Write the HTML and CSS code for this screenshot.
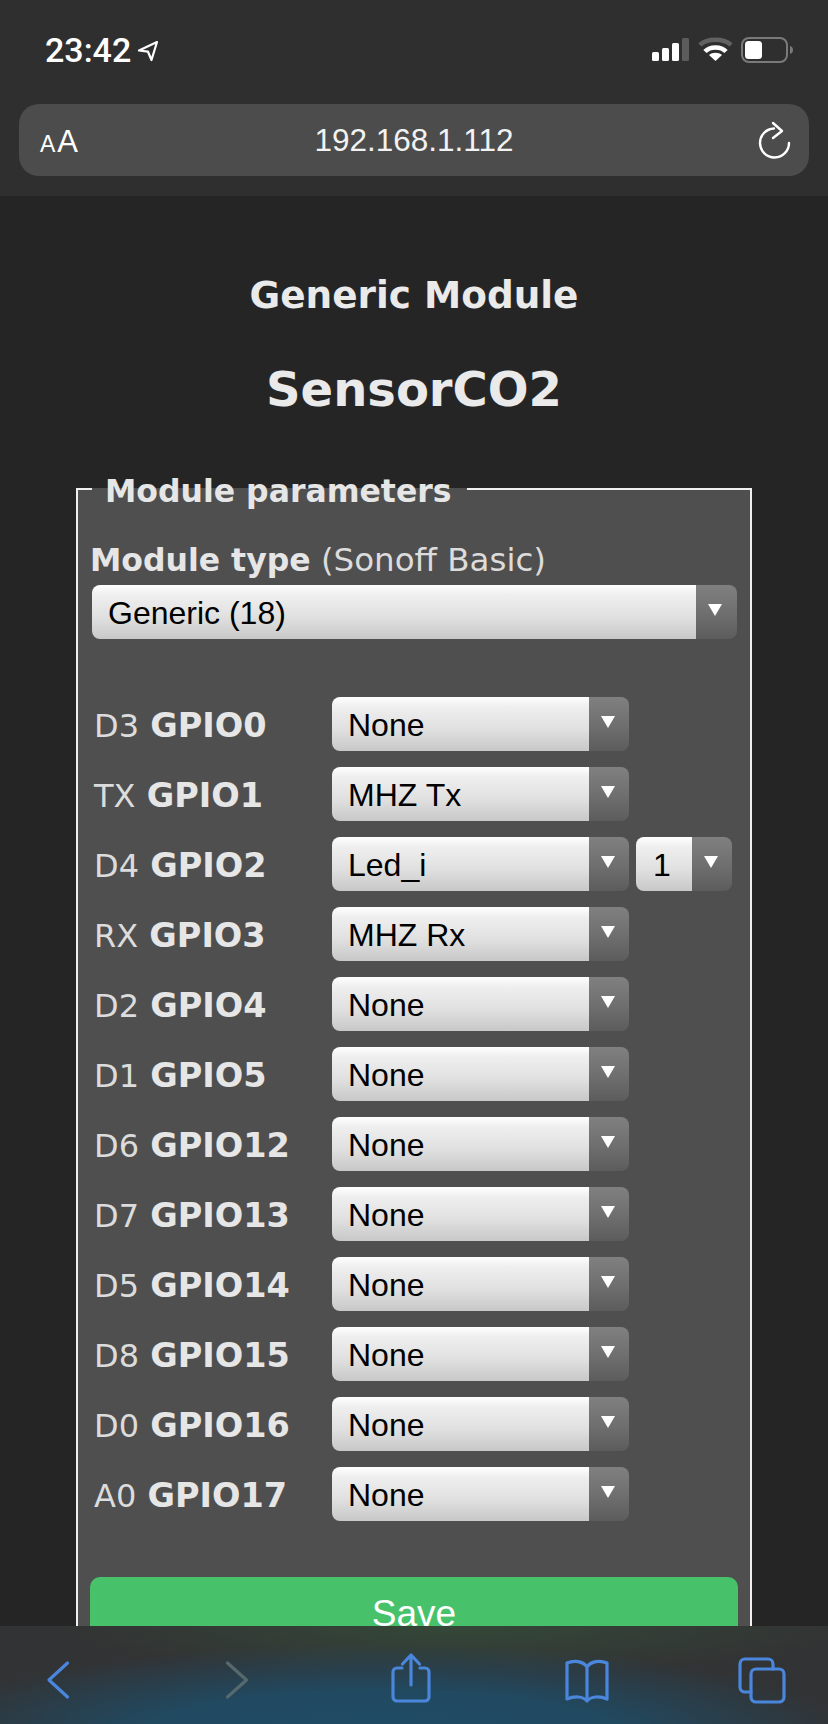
FILE: index.html
```html
<!DOCTYPE html>
<html lang="en">
<head>
<meta charset="utf-8">
<title>Generic Module</title>
<link rel="stylesheet" href="styles.css">
</head>
<body>
<div class="screen">
  <header class="chrome">
    <div class="status">
      <div class="status-left">
        <span class="time">23:42</span>
        <svg class="loc" width="22" height="22" viewBox="0 0 22 22"><path d="M20 2 2 10.500l9 1.200L14.500 20z" fill="none" stroke="#fff" stroke-width="2.200" stroke-linejoin="round"/></svg>
      </div>
      <svg class="status-icons" width="144" height="28" viewBox="0 0 144 28">
        <rect x="3" y="16" width="7" height="9" rx="1.500" fill="#fff"/>
        <rect x="13" y="12" width="7" height="13" rx="1.500" fill="#fff"/>
        <rect x="23" y="7" width="7" height="18" rx="1.500" fill="#fff"/>
        <rect x="33" y="2" width="7" height="23" rx="1.500" fill="#5c5c5c"/>
        <path d="M51 9C58 2 75 2 82 9" fill="none" stroke="#626262" stroke-width="4.500"/>
        <path d="M56 15.500C61 10 72 10 77 15.500" fill="none" stroke="#fff" stroke-width="4.500"/>
        <path d="M66.500 25 60 19C63.500 16 69.500 16 73 19z" fill="#fff"/>
        <rect x="93" y="2" width="45" height="24" rx="7" fill="none" stroke="#7a7a7a" stroke-width="2"/>
        <rect x="96" y="5" width="17" height="18" rx="3.500" fill="#fff"/>
        <path d="M141 10c2 .6 3 2.200 3 4s-1 3.400-3 4z" fill="#7a7a7a"/>
      </svg>
    </div>
    <div class="urlbar">
      <span class="aa"><span class="aa-small">A</span>A</span>
      <span class="url">192.168.1.112</span>
      <svg class="reload" width="34" height="38" viewBox="0 0 34 38"><path d="M18 6.500A14.500 14.500 0 1 0 33 21" fill="none" stroke="#fff" stroke-width="2.400" stroke-linecap="round"/><path d="M17 1 26 9l-9 7" fill="none" stroke="#fff" stroke-width="2.400" stroke-linecap="round" stroke-linejoin="round"/></svg>
    </div>
  </header>

  <main class="page">
    <h3 class="subtitle">Generic Module</h3>
    <h2 class="title">SensorCO2</h2>
    <fieldset class="panel">
      <legend class="legend">Module parameters</legend>
      <div class="type-label"><b>Module type</b> (Sonoff Basic)</div>
      <div class="select select-wide"><span class="select-value">Generic (18)</span><span class="select-arrow"></span></div>

      <div class="rows">
        <div class="row"><span class="pin">D3 <b>GPIO0</b></span><div class="select select-pin"><span class="select-value">None</span><span class="select-arrow"></span></div></div>
        <div class="row"><span class="pin">TX <b>GPIO1</b></span><div class="select select-pin"><span class="select-value">MHZ Tx</span><span class="select-arrow"></span></div></div>
        <div class="row"><span class="pin">D4 <b>GPIO2</b></span><div class="select select-pin"><span class="select-value">Led_i</span><span class="select-arrow"></span></div><div class="select select-index"><span class="select-value">1</span><span class="select-arrow"></span></div></div>
        <div class="row"><span class="pin">RX <b>GPIO3</b></span><div class="select select-pin"><span class="select-value">MHZ Rx</span><span class="select-arrow"></span></div></div>
        <div class="row"><span class="pin">D2 <b>GPIO4</b></span><div class="select select-pin"><span class="select-value">None</span><span class="select-arrow"></span></div></div>
        <div class="row"><span class="pin">D1 <b>GPIO5</b></span><div class="select select-pin"><span class="select-value">None</span><span class="select-arrow"></span></div></div>
        <div class="row"><span class="pin">D6 <b>GPIO12</b></span><div class="select select-pin"><span class="select-value">None</span><span class="select-arrow"></span></div></div>
        <div class="row"><span class="pin">D7 <b>GPIO13</b></span><div class="select select-pin"><span class="select-value">None</span><span class="select-arrow"></span></div></div>
        <div class="row"><span class="pin">D5 <b>GPIO14</b></span><div class="select select-pin"><span class="select-value">None</span><span class="select-arrow"></span></div></div>
        <div class="row"><span class="pin">D8 <b>GPIO15</b></span><div class="select select-pin"><span class="select-value">None</span><span class="select-arrow"></span></div></div>
        <div class="row"><span class="pin">D0 <b>GPIO16</b></span><div class="select select-pin"><span class="select-value">None</span><span class="select-arrow"></span></div></div>
        <div class="row"><span class="pin">A0 <b>GPIO17</b></span><div class="select select-pin"><span class="select-value">None</span><span class="select-arrow"></span></div></div>
      </div>

      <button class="save">Save</button>
    </fieldset>
  </main>

  <nav class="toolbar">
    <svg class="toolbar-icons" width="828" height="98" viewBox="0 0 828 98" fill="none" stroke="#4a86dc" stroke-width="3.200" stroke-linecap="round" stroke-linejoin="round">
      <path d="M67.500 37 49 54l18.500 17"/>
      <path d="M227.500 37 246.500 54l-19 17" stroke="#56696c"/>
      <path d="M402 42h-5a4 4 0 0 0-4 4v25a4 4 0 0 0 4 4h28a4 4 0 0 0 4-4V46a4 4 0 0 0-4-4h-5"/>
      <path d="M411 59V30M402.500 38l8.500-9 8.500 9"/>
      <path d="M587 41c-4-6-13-7-20-4v36c7-3 16-3 20 2 4-5 13-5 20-2V37c-7-3-16-2-20 4zM587 41v34"/>
      <path d="M751 66h-6a5 5 0 0 1-5-5V38a5 5 0 0 1 5-5h23a5 5 0 0 1 5 5v5"/>
      <rect x="751" y="43" width="33" height="33" rx="5"/>
    </svg>
  </nav>
</div>
</body>
</html>
```

FILE: styles.css
```css
* { box-sizing: border-box; }

html, body { margin: 0; padding: 0; }

body {
  background: #252525;
  font-family: "DejaVu Sans", Verdana, sans-serif;
}

.screen {
  position: relative;
  width: 828px;
  height: 1724px;
  overflow: hidden;
  background: #252525;
}

/* Browser chrome */
.chrome {
  height: 196px;
  background: #2f2f2f;
  padding: 0 19px;
}

.status {
  height: 104px;
  display: flex;
  align-items: flex-start;
  justify-content: space-between;
  padding: 36px 0 0 26px;
}

.status-left {
  display: flex;
  align-items: center;
  gap: 6px;
}

.time {
  font-family: Roboto, "Liberation Sans", sans-serif;
  font-weight: 500;
  font-size: 34px;
  line-height: 28px;
  color: #fff;
}

.loc { margin-top: 2px; }

.status-icons { display: block; margin-right: 16px; }

.urlbar {
  height: 72px;
  border-radius: 20px;
  background: #4c4c4c;
  display: grid;
  grid-template-columns: 1fr auto 1fr;
  align-items: center;
  padding: 0 19px 0 21px;
  color: #fff;
}

.aa {
  font-family: "Liberation Sans", sans-serif;
  font-size: 31px;
  line-height: 1;
  padding-top: 3px;
}

.aa-small { font-size: 23px; margin-right: 2px; }

.url {
  font-family: "Liberation Sans", sans-serif;
  font-size: 31.500px;
  line-height: 1;
  color: #f2f2f2;
  padding: 2px 2px 0 0;
}

.reload { justify-self: end; display: block; margin-top: 1px; overflow: visible; }

/* Page content */
.page {
  padding: 0 76px;
  color: #eaeaea;
  text-align: center;
}

.subtitle {
  margin: 0;
  padding-top: 76px;
  font-size: 37.400px;
  line-height: 46px;
  font-weight: 700;
}

.title {
  margin: 0;
  padding-top: 44px;
  font-size: 48px;
  line-height: 54px;
  font-weight: 700;
}

.panel {
  margin: 0;
  margin-top: 53px;
  padding: 0 13px 40px 14px;
  min-width: 0;
  text-align: left;
  background: #4f4f4f;
  border: 2px solid #f0f0f0;
}

.legend {
  margin-left: 0;
  padding: 4px 15px 0 13px;
  font-size: 31.500px;
  line-height: 36px;
  font-weight: 700;
  color: #e6e6e6;
}

.type-label {
  margin-top: 29px;
  margin-left: -2px;
  font-size: 32.500px;
  line-height: 44px;
  color: #dcdcdc;
}

.type-label b { font-size: 31.500px; color: #e6e6e6; }

/* Select controls */
.select {
  display: flex;
  height: 54px;
  border-radius: 8px;
  overflow: hidden;
  font-family: "Liberation Sans", Arial, sans-serif;
  font-size: 32px;
  line-height: 56px;
  color: #000;
}

.select-value {
  flex: 1;
  min-width: 0;
  padding-left: 16px;
  background: linear-gradient(#ffffff 0%, #efefef 18%, #e0e0e0 60%, #c8c8c8 100%);
}

.select-arrow {
  position: relative;
  flex: none;
  width: 40px;
  background: linear-gradient(#808080 0%, #6e6e6e 55%, #5c5c5c 100%);
}

.select-arrow::after {
  content: "";
  position: absolute;
  top: 19px;
  left: 12px;
  border-left: 7px solid transparent;
  border-right: 7px solid transparent;
  border-top: 12px solid #fff;
}

.select-wide { margin-top: 3px; }

.select-wide .select-arrow { width: 41px; }

.select-pin { width: 297px; }

.select-index { width: 96px; margin-left: 7px; }

.select-index .select-value { padding-left: 17px; }

/* GPIO rows */
.rows {
  display: flex;
  flex-direction: column;
  gap: 16px;
  margin-top: 58px;
}

.row {
  display: flex;
  align-items: center;
  height: 54px;
}

.pin {
  flex: none;
  width: 240px;
  padding: 2px 0 0 2px;
  font-size: 32px;
  word-spacing: 1px;
  color: #dcdcdc;
}

.pin b { font-size: 33.500px; color: #e6e6e6; }

.save {
  display: block;
  width: 648px;
  height: 70px;
  margin: 56px 0 0 -2px;
  border: 0;
  border-radius: 10px;
  background: #47c26a;
  color: #fff;
  font-family: "Liberation Sans", Arial, sans-serif;
  font-size: 37px;
  line-height: 74px;
  padding: 0;
}

/* Bottom toolbar, floats over the page */
.toolbar {
  position: absolute;
  left: 0;
  right: 0;
  bottom: 0;
  height: 98px;
  background:
    radial-gradient(ellipse 480px 95px at 46% 115%, #1f4c66 0%, rgba(31, 76, 102, 0.9) 50%, rgba(31, 76, 102, 0) 100%),
    radial-gradient(ellipse 400px 50px at 55% 0%, #344838 0%, rgba(52, 72, 56, 0) 100%),
    #323334;
}

.toolbar-icons { display: block; }
```
